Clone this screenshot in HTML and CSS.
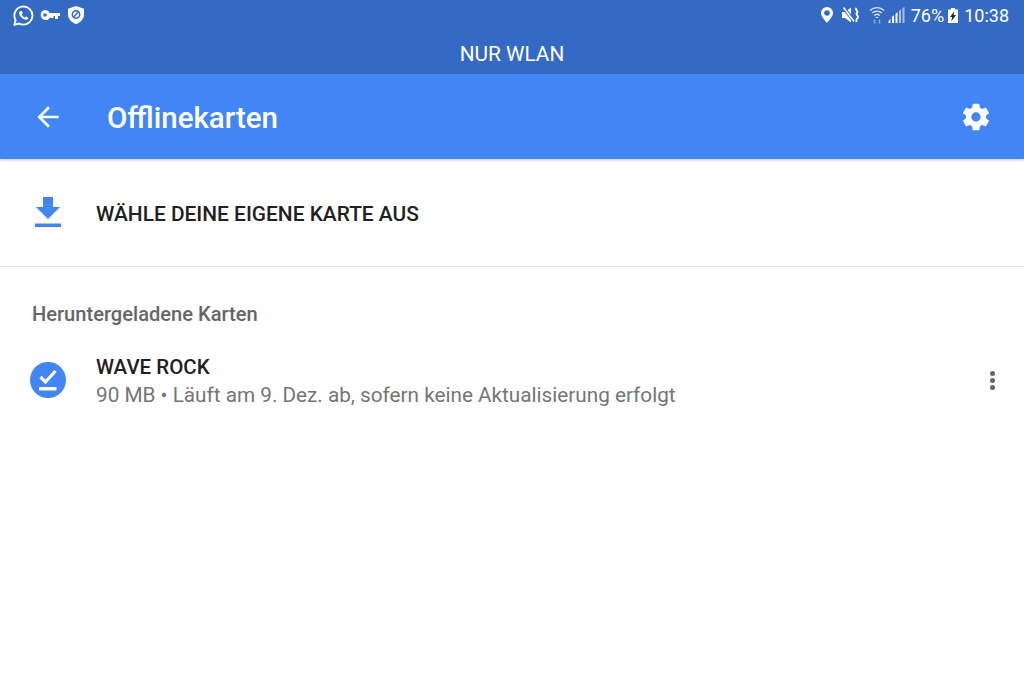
FILE: index.html
```html
<!DOCTYPE html>
<html lang="de">
<head>
<meta charset="utf-8">
<title>Offlinekarten</title>
<link rel="stylesheet" href="styles.css">
</head>
<body>
<header class="status">
  <div class="status-row">
    <div class="status-left">
      <svg class="ic-wa" viewBox="0 0 20 20"><path d="M1.200 19l1.300-4.600A8.600 8.600 0 1 1 5.800 17.600z" fill="none" stroke="#fff" stroke-width="1.800" stroke-linejoin="round"/><path d="M7.200 5.600c-.5 0-1.400.7-1.400 2 0 2.600 3.500 6.300 6.600 6.500 1.300 0 2.300-1 2.200-1.900l-2.200-1.200-1 1c-1.300-.4-2.500-1.600-3-3l.9-1-1-2.300z" fill="#fff"/></svg>
      <svg class="ic-key" viewBox="0 0 20 10"><path d="M5 0a5 5 0 0 1 4.600 3H20v3h-2v3h-3V6h-1.500v2h-3V6.500A5 5 0 1 1 5 0zm0 3.200a1.800 1.800 0 1 0 0 3.600 1.800 1.800 0 0 0 0-3.600z" fill="#fff" fill-rule="evenodd"/></svg>
      <svg class="ic-shield" viewBox="0 0 16 18"><path d="M8 0l8 2.800v5.400c0 4.500-3.400 8.300-8 9.800-4.600-1.500-8-5.300-8-9.800V2.800z" fill="#fff"/><circle cx="8" cy="8.500" r="3.700" fill="none" stroke="#346ac3" stroke-width="1.500"/><path d="M5.500 11l5-5" stroke="#346ac3" stroke-width="1.500"/></svg>
    </div>
    <div class="status-right">
      <svg class="ic-pin" viewBox="0 0 12 16"><path d="M6 0a6 6 0 0 1 6 6c0 3.500-3.500 6.800-6 10C3.500 12.800 0 9.500 0 6a6 6 0 0 1 6-6zm0 3.200a2.800 2.800 0 1 0 0 5.600 2.800 2.800 0 0 0 0-5.600z" fill="#fff" fill-rule="evenodd"/></svg>
      <svg class="ic-mute" viewBox="0 0 18 16"><path d="M0 5h3l6-4.500v15L3 11H0z" fill="#fff"/><path d="M1 0l11 14" stroke="#346ac3" stroke-width="3.500"/><path d="M1.500 .5l10.500 14" stroke="#fff" stroke-width="1.600"/><path d="M14.500 1c-2 1.700 2.500 3.300.5 5s2.500 3.300.5 5-1.500 2.500-1 4" fill="none" stroke="#fff" stroke-width="1.900"/></svg>
      <svg class="ic-wifi" viewBox="0 0 16 18"><path d="M1 4.500a10 10 0 0 1 14 0M3.200 7a7 7 0 0 1 9.600 0M5.300 9.500a4 4 0 0 1 5.400 0" fill="none" stroke="#dfe8f7" stroke-width="1.300"/><path d="M8 10.500l1.500 1.500H6.500z" fill="#fff"/><path d="M5.500 13.500v4M10.500 13.500v4" stroke="#8fb0e2" stroke-width="1.500"/></svg>
      <svg class="ic-signal" viewBox="0 0 16 16"><path d="M0 16v-2l2-2v4zM3.500 16v-6l2-2v8zM7 16V7l2-2v11z" fill="#fff"/><path d="M10.500 16V4l2-2v14zM14 16V1l2-1v16z" fill="#a8c2ea"/></svg>
      <span class="pct">76%</span>
      <svg class="ic-batt" viewBox="0 0 10 15"><path d="M3 0h4v1.500h3V15H0V1.500h3z" fill="#fff"/><path d="M6.500 3L2 9h2.200l-1 4.500L8 7H5.500z" fill="#222"/></svg>
      <span class="clock">10:38</span>
    </div>
  </div>
  <div class="wifi-only">NUR WLAN</div>
</header>
<nav class="appbar">
  <svg class="ic-back" viewBox="0 0 24 24"><path d="M20 11H7.830l5.590-5.590L12 4l-8 8 8 8 1.410-1.410L7.830 13H20z" fill="#fff"/></svg>
  <h1 class="title">Offlinekarten</h1>
  <svg class="ic-gear" viewBox="0 0 24 24"><path d="M19.430 12.980c.04-.32.070-.64.070-.98s-.03-.66-.07-.98l2.110-1.650c.19-.15.240-.42.120-.64l-2-3.460c-.12-.22-.39-.3-.61-.22l-2.490 1c-.52-.4-1.080-.73-1.690-.98l-.38-2.650A.49.49 0 0 0 14 2h-4c-.25 0-.46.18-.49.420l-.38 2.650c-.61.25-1.170.59-1.690.98l-2.490-1c-.23-.09-.49 0-.61.220l-2 3.460c-.13.220-.07.490.12.640l2.110 1.650c-.04.32-.07.65-.07.980s.03.660.07.980l-2.110 1.650c-.19.150-.24.420-.12.640l2 3.460c.12.220.39.300.61.220l2.490-1c.52.400 1.080.730 1.690.980l.38 2.650c.03.240.24.420.49.420h4c.25 0 .46-.18.49-.42l.38-2.650c.61-.25 1.170-.59 1.690-.98l2.490 1c.23.090.49 0 .61-.22l2-3.460c.12-.22.070-.49-.12-.64l-2.110-1.650zM12 15.500a3.500 3.500 0 1 1 0-7 3.500 3.500 0 0 1 0 7z" fill="#fff"/></svg>
</nav>
<main>
  <section class="choose">
    <svg class="ic-download" viewBox="0 0 26 30"><path d="M8 0h10v10h7L13 22 1 10h7zM0 26.500h26V30H0z" fill="#4285f4"/></svg>
    <span class="choose-label">WÄHLE DEINE EIGENE KARTE AUS</span>
  </section>
  <h2 class="section-title">Heruntergeladene Karten</h2>
  <section class="map-row">
    <svg class="ic-done" viewBox="0 0 36 36"><circle cx="18" cy="18" r="18" fill="#4285f4"/><path d="M10.500 15l5 5L25.500 9" fill="none" stroke="#fff" stroke-width="3.200"/><path d="M9 25h17.500v3.500H9z" fill="#fff"/></svg>
    <div class="map-text">
      <div class="map-name">WAVE ROCK</div>
      <div class="map-info">90 MB • Läuft am 9. Dez. ab, sofern keine Aktualisierung erfolgt</div>
    </div>
    <div class="more"><i></i><i></i><i></i></div>
  </section>
</main>
</body>
</html>
```
FILE: styles.css
```css
* { box-sizing: border-box; }
html, body { margin: 0; padding: 0; }
body {
  width: 1024px;
  height: 688px;
  overflow: hidden;
  background: #fff;
  font-family: Roboto, "Liberation Sans", sans-serif;
}
svg { display: block; flex: none; }

.status { height: 74px; background: #346ac3; color: #fff; }
.status-row {
  height: 32px;
  display: flex;
  justify-content: space-between;
  align-items: center;
  padding: 0 15px 2px 13px;
}
.status-left, .status-right { display: flex; align-items: center; }
.ic-wa { width: 21px; height: 21px; }
.ic-key { width: 20px; height: 10px; margin-left: 6px; }
.ic-shield { width: 16px; height: 18px; margin-left: 8px; }
.ic-pin { width: 12px; height: 16px; margin-right: -1px; transform: translateX(-1px); }
.ic-mute { width: 18px; height: 16px; margin-left: 9px; }
.ic-wifi { width: 16px; height: 18px; margin-left: 9px; }
.ic-signal { width: 17px; height: 16px; margin-left: 3px; }
.pct { font-size: 18px; margin-left: 6px; }
.ic-batt { width: 10px; height: 15px; margin-left: 4px; }
.clock { font-size: 18px; margin-left: 6px; }
.wifi-only {
  text-align: center;
  font-size: 20.8px;
  line-height: 21px;
  padding-top: 12px;
}

.appbar {
  height: 85px;
  background: #4285f4;
  display: flex;
  align-items: center;
  padding: 0 32px;
  box-shadow: 0 1px 3px rgba(0,0,0,.22);
  position: relative;
}
.ic-back { width: 32px; height: 32px; }
.title {
  flex: 1;
  margin: 3px 0 0 43px;
  font-size: 29.5px;
  font-weight: 500;
  color: #fff;
}
.ic-gear { width: 32px; height: 32px; }

.choose {
  height: 108px;
  display: flex;
  align-items: center;
  border-bottom: 1px solid #e4e4e4;
  padding: 0 0 0 35px;
}
.ic-download { width: 26px; height: 30px; margin-bottom: 2px; }
.choose-label {
  margin: 2px 0 0 35px;
  font-size: 20.9px;
  font-weight: 500;
  color: #212121;
}
.section-title {
  margin: 0;
  padding: 36px 0 0 32px;
  font-size: 20.1px;
  line-height: 22px;
  font-weight: 500;
  color: #666;
}
.map-row {
  display: flex;
  align-items: center;
  margin-top: 29px;
  padding: 0 24px 0 30px;
}
.ic-done { width: 36px; height: 36px; margin-bottom: 3px; }
.map-text { flex: 1; margin-left: 30px; }
.map-name { font-size: 20.5px; line-height: 27px; font-weight: 500; color: #212121; }
.map-info { font-size: 20.72px; line-height: 28px; color: #757575; }
.more { display: flex; flex-direction: column; gap: 2px; margin: 0 5px 3px 0; }
.more i { display: block; width: 5px; height: 5px; border-radius: 50%; background: #666; }
```
